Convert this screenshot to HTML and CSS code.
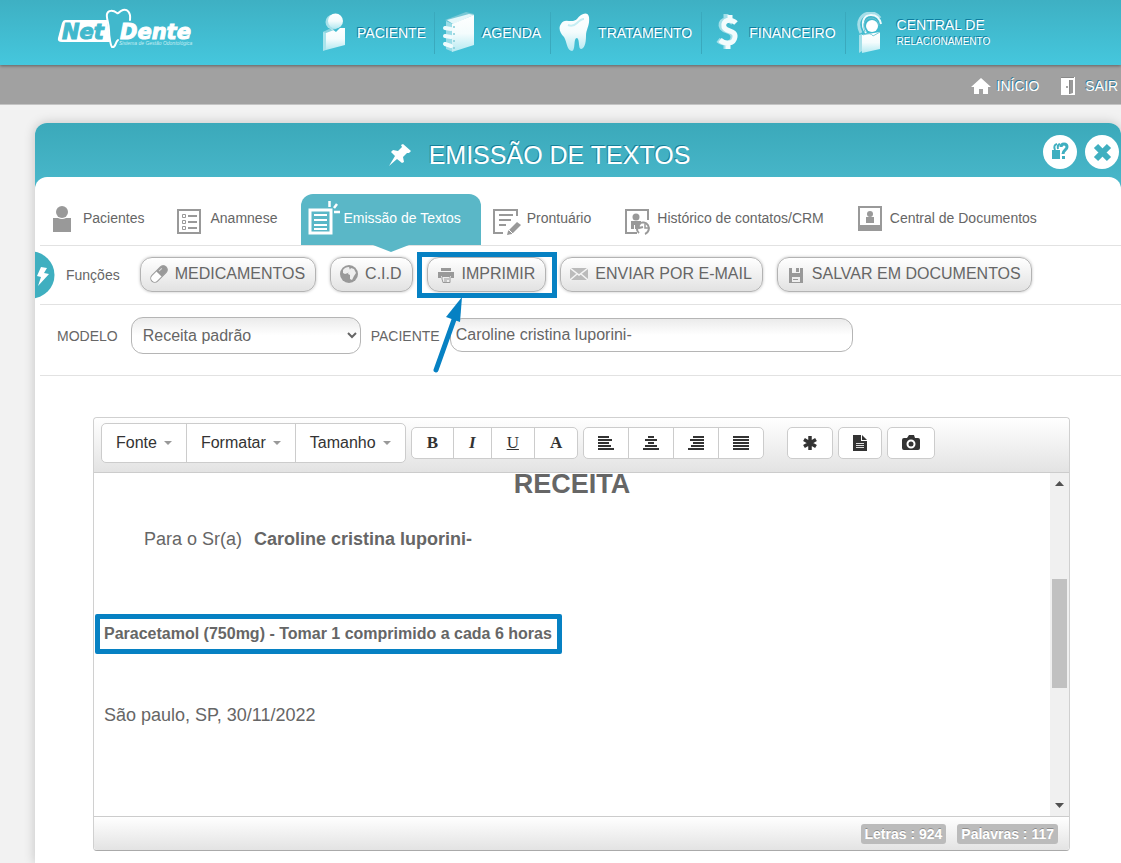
FILE: index.html
```html
<!DOCTYPE html>
<html lang="pt-BR">
<head>
<meta charset="utf-8">
<title>NetDente - Emissão de Textos</title>
<link rel="stylesheet" href="styles.css">
</head>
<body>
<svg class="defs" width="0" height="0" aria-hidden="true">
  <defs>
    <linearGradient id="ice" x1="0" y1="0" x2="0" y2="1">
      <stop offset="0" stop-color="#ffffff"/><stop offset=".5" stop-color="#f4fcfd"/><stop offset="1" stop-color="#b4e9f1"/>
    </linearGradient>
  </defs>
</svg>

<header class="topbar">
  <a class="logo" href="#" aria-label="NetDente">
    <svg width="136" height="44" viewBox="0 0 136 44">
      <path d="M8 12H50L53 34H5Q0 34 1 30L5 15Q6 12 8 12Z" fill="#fff"/>
      <path d="M73 12C74 4 70 1 66 2C62 3 62 6 60 5C56 2 51 2 50 6C49 10 52 15 52 22C52 30 54 38 55 39C59 40 58 34 61 32" fill="#41b8cc" stroke="#fff" stroke-width="2" stroke-linecap="round"/>
      <text class="logo-net" x="5" y="31">Net</text>
      <text class="logo-dente" x="63" y="31">Dente</text>
      <text class="logo-sub" x="62" y="37">Sistema de Gestão Odontológica</text>
    </svg>
  </a>
  <nav class="mainnav">
    <a href="#">
      <svg width="34" height="42" viewBox="0 0 34 42"><circle cx="16" cy="10" r="7.500" fill="#a9e1ea"/><circle cx="18.500" cy="9" r="7.500" fill="url(#ice)"/><path d="M6 20L9 19V38L6 39Z" fill="#a9e4ec"/><path d="M9 20L15 17L19 20L23 16L28 16V33L9 38Z" fill="url(#ice)"/><path d="M6 20L12 17L17 18L9 21Z" fill="#8bd3df"/></svg>
      <span>PACIENTE</span></a>
    <a href="#">
      <svg width="34" height="42" viewBox="0 0 34 42"><path d="M3 8L24 0L32 2V5L11 12Z" fill="#78c8d6"/><path d="M5 8L27 2L32 3L11 12Z" fill="#e4f7fa"/><path d="M4 9L11 12V40L4 37Z" fill="#9bdce7"/><path d="M10 12L32 3V33L10 40Z" fill="url(#ice)"/><path d="M3 16L9 17M3 24L9 25M3 32L9 34" fill="none" stroke="#effbfd" stroke-width="4" stroke-linecap="round"/><g fill="#82ccd9"><circle cx="12" cy="15" r="1"/><circle cx="12" cy="22" r="1"/><circle cx="12" cy="29" r="1"/><circle cx="12" cy="36" r="1"/></g></svg>
      <span>AGENDA</span></a>
    <a href="#">
      <svg width="34" height="42" viewBox="0 0 34 42"><path d="M3 12C6 5 14 12 19 7C23 1 30 -1 31 5C32 14 28 17 28 24C28 32 26 37 23 37C20 37 22 27 19 26C15 26 18 38 14 39C9 39 9 30 6 25C2 21 0 16 3 12Z" fill="url(#ice)"/><path d="M10 13Q15 15 19 11Q23 7 26 7" fill="none" stroke="#c6eef4" stroke-width="2"/></svg>
      <span>TRATAMENTO</span></a>
    <a href="#">
      <svg width="34" height="42" viewBox="0 0 34 42"><g fill="none"><path d="M24 11C18 5 9 9 13 16C16 20 24 18 24 25C24 32 15 33 9 28M17 2V9M17 30V37" stroke="#a2dfe9" stroke-width="5"/><path d="M27 11C22 6 13 8 15 15C17 20 27 18 26 25C25 32 17 33 11 28M21 3V9M19 30V37" stroke="#f3fcfd" stroke-width="5"/></g></svg>
      <span>FINANCEIRO</span></a>
    <a class="wide" href="#">
      <svg width="34" height="42" viewBox="0 0 34 42"><path d="M6 23L9 22V39L6 41Z" fill="#a6e0e9"/><path d="M9 23L27 20V37L9 41Z" fill="url(#ice)"/><path d="M8 21C2 9 9 1 18 1Q24 1 27 6" fill="none" stroke="#a6dee8" stroke-width="3"/><path d="M13 21C7 12 10 3 18 3Q26 3 28 12" fill="none" stroke="#effbfd" stroke-width="2"/><path d="M12 20C9 12 12 6 19 6Q25 7 26 14" fill="none" stroke="#6cc3d2"/><circle cx="19" cy="14" r="6" fill="#fff"/><path d="M10 23Q18 20 20 24L27 20" fill="none" stroke="#7fcbd8"/></svg>
      <span>CENTRAL DE<small>RELACIONAMENTO</small></span></a>
  </nav>
</header>

<nav class="subbar">
  <a href="#"><svg width="20" height="18" viewBox="0 0 20 18"><path d="M10 1L20 10H17V17H12V12H8V17H3V10H0Z" fill="#fff"/></svg>INÍCIO</a>
  <a class="exit" href="#"><svg width="14" height="18" viewBox="0 0 14 18"><path d="M0 0H14V18H0Z" fill="#fff"/><path d="M9 3H12V16L9 17Z" fill="#999"/><path d="M8.500 3V17M0 .5H13" stroke="#888"/><circle cx="6" cy="10" r="1" fill="#888"/></svg>SAIR</a>
</nav>

<main class="panel">
  <header class="panel-head">
    <h1><svg width="24" height="24" viewBox="0 0 24 24"><path d="M15 1L23 8L21 10L19 10L15 14L16 19L14 20L9 16L1 23L7 13L3 9L5 7L10 8L14 4L13 2Z" fill="#fff"/></svg>EMISSÃO DE TEXTOS</h1>
    <div class="head-actions">
      <button type="button" aria-label="Ajuda"><svg width="34" height="34" viewBox="0 0 34 34"><path d="M9 15H17V24H9Z" fill="#3fafc0"/><path d="M14 9Q10 10 12 15M17 9Q14 10 15 14" fill="none" stroke="#3fafc0" stroke-width="2"/><path d="M18 12C18 8 24 8 24 12C24 15 20 15 20 19" fill="none" stroke="#3fafc0" stroke-width="3"/><path d="M19 21H22V24H19Z" fill="#3fafc0"/></svg></button>
      <button type="button" aria-label="Fechar"><svg width="34" height="34" viewBox="0 0 34 34"><path d="M11 11L24 24M24 11L11 24" stroke="#3fafc0" stroke-width="6"/></svg></button>
    </div>
  </header>

  <div class="content">
    <nav class="tabs">
      <a href="#"><svg width="34" height="36" viewBox="0 0 34 36"><circle cx="16" cy="12" r="6" fill="#999"/><path d="M7 18H12Q16 20 20 18H25V32H7Z" fill="#999"/></svg>Pacientes</a>
      <a href="#"><svg width="34" height="36" viewBox="0 0 34 36"><path d="M5 10H27V33H5Z" fill="none" stroke="#999" stroke-width="2"/><g fill="none" stroke="#999"><path d="M9.500 14.500H12.500V17.500H9.500ZM9.500 20.500H12.500V23.500H9.500ZM9.500 26.500H12.500V29.500H9.500Z"/><path d="M15 16H24M15 22H24M15 28H24" stroke-width="2"/></g></svg>Anamnese</a>
      <a class="active" href="#"><svg width="34" height="36" viewBox="0 0 34 36"><g fill="none" stroke="#fff"><path d="M4 10H25V33H4Z" stroke-width="3"/><path d="M8 15H21M8 20H21M8 25H21M8 29H21" stroke-width="2"/><path d="M23.500 1V7M28 8L31 4M28 12H34" stroke-width="2.500"/></g></svg>Emissão de Textos</a>
      <a href="#"><svg width="34" height="36" viewBox="0 0 34 36"><g fill="none" stroke="#999" stroke-width="2"><path d="M27 16V10H4V33H13"/><path d="M9 15H23M9 20H21M9 25H16"/></g><path d="M17 35L18 31L27 22L31 25L22 34Z" fill="#999"/><path d="M18 29L24 35" stroke="#fff"/></svg>Prontuário</a>
      <a href="#"><svg width="34" height="36" viewBox="0 0 34 36"><g fill="none" stroke="#999" stroke-width="2"><path d="M28 20V10H6V33H17"/><path d="M19 33A6 6 0 1 1 25 34M18 24L19 28L23 27"/><path d="M25 24V28H28" stroke-width="1.500"/></g><circle cx="16" cy="17" r="3.500" fill="#999"/><path d="M11 21H21V24L17 29H15V25H14V29H11Z" fill="#999"/></svg>Histórico de contatos/CRM</a>
      <a href="#"><svg width="34" height="36" viewBox="0 0 34 36"><path d="M5 6H29V31H5ZM7 8V25H27V8Z" fill="#999" fill-rule="evenodd"/><circle cx="17" cy="14" r="3" fill="#999"/><path d="M13 17H21V23H13Z" fill="#999"/></svg>Central de Documentos</a>
    </nav>

    <div class="functions">
      <svg class="bolt" width="20" height="48" viewBox="0 0 20 48"><circle cx="-4" cy="24" r="23.500" fill="#3fafc0"/><path d="M6 16L12 17L9 22L14 23L3 35L6 26L2 25Z" fill="#fff"/></svg>
      <span class="label">Funções</span>
      <div class="buttons">
        <button type="button"><svg width="18" height="18" viewBox="0 0 18 18"><g transform="rotate(-45 9 9)"><rect x="-1" y="5" width="20" height="8" rx="4" fill="#fff" stroke="#999"/><path d="M9 5H15A4 4 0 0 1 15 13H9Z" fill="#999"/><path d="M11 7H15" stroke="#ddd"/></g></svg>MEDICAMENTOS</button>
        <button type="button"><svg width="18" height="18" viewBox="0 0 18 18"><circle cx="9" cy="9" r="9" fill="#999"/><path d="M3 5Q5 2 9 2L10 5L8 8L5 9L3 8ZM11 3L14 4L16 8L14 11L12 15L10 14V10L8 9L9 6Z" fill="#eee"/></svg>C.I.D</button>
        <span class="marked">
          <button type="button"><svg width="18" height="18" viewBox="0 0 18 18"><path d="M4 3H14V6H4ZM1 7H17V13H14V11H4V13H1Z" fill="#999"/><path d="M5 11.500H13V17.500H6L5 14Z" fill="#eee" stroke="#999"/><path d="M7 14H12M7 16H10" stroke="#999"/></svg>IMPRIMIR</button>
          <svg class="pointer" width="36" height="76" viewBox="0 0 36 76"><path d="M6 73L26 17" stroke="#0681c3" stroke-width="5" stroke-linecap="round"/><path d="M32 0L30 25L16 20Z" fill="#0681c3"/></svg>
        </span>
        <button type="button"><svg width="18" height="18" viewBox="0 0 18 18"><path d="M0 3H18V15H0Z" fill="#bbb"/><path d="M0 3L9 10L18 3M0 15L7 9M18 15L11 9" fill="none" stroke="#f4f4f4" stroke-width="1.500"/></svg>ENVIAR POR E-MAIL</button>
        <button type="button"><svg width="18" height="18" viewBox="0 0 18 18"><path d="M2 3H5V8H13V3H16V18H2Z" fill="#999"/><path d="M9 3H12V7H9Z" fill="#999"/><path d="M5 12H13V17H5Z" fill="#eee"/><path d="M6 14.500H11" stroke="#999"/></svg>SALVAR EM DOCUMENTOS</button>
      </div>
    </div>

    <form class="filters">
      <label for="modelo">MODELO</label>
      <select id="modelo"><option>Receita padrão</option></select>
      <label for="paciente">PACIENTE</label>
      <input id="paciente" type="text" value="Caroline cristina luporini-">
    </form>

    <section class="editor">
      <div class="toolbar">
        <div class="group menus">
          <button type="button">Fonte<i class="caret"></i></button>
          <button type="button">Formatar<i class="caret"></i></button>
          <button type="button">Tamanho<i class="caret"></i></button>
        </div>
        <div class="group styles">
          <button type="button"><b>B</b></button>
          <button type="button"><b><em>I</em></b></button>
          <button type="button"><u>U</u></button>
          <button type="button"><b>A</b></button>
        </div>
        <div class="group icons">
          <button type="button" aria-label="Alinhar à esquerda"><svg width="16" height="14" viewBox="0 0 16 14"><path d="M0 1H11M0 4H14M0 7H11M0 10H13M0 13H16" stroke="#333" stroke-width="2"/></svg></button>
          <button type="button" aria-label="Centralizar"><svg width="16" height="14" viewBox="0 0 16 14"><path d="M5 1H11M2 4H14M5 7H11M2 10H14M0 13H16" stroke="#333" stroke-width="2"/></svg></button>
          <button type="button" aria-label="Alinhar à direita"><svg width="16" height="14" viewBox="0 0 16 14"><path d="M5 1H16M2 4H16M5 7H16M3 10H16M0 13H16" stroke="#333" stroke-width="2"/></svg></button>
          <button type="button" aria-label="Justificar"><svg width="16" height="14" viewBox="0 0 16 14"><path d="M0 1H16M0 4H16M0 7H16M0 10H16M0 13H16" stroke="#333" stroke-width="2"/></svg></button>
        </div>
        <div class="group icons apart">
          <button type="button" aria-label="Caractere especial"><svg width="16" height="16" viewBox="0 0 16 16"><path d="M8 1V15M2 4.500L14 11.500M14 4.500L2 11.500" stroke="#333" stroke-width="3.500"/></svg></button>
        </div>
        <div class="group icons">
          <button type="button" aria-label="Documento"><svg width="14" height="16" viewBox="0 0 14 16"><path d="M0 0H8V6H14V16H0Z" fill="#333"/><path d="M9 0L14 5H9Z" fill="#333"/><path d="M3 8.500H11M3 10.500H11M3 12.500H11" stroke="#ddd"/></svg></button>
        </div>
        <div class="group icons">
          <button type="button" aria-label="Câmera"><svg width="18" height="16" viewBox="0 0 18 16"><path d="M2 3H5L7 0H12L13 3H16Q18 3 18 5V13Q18 15 16 15H2Q0 15 0 13V5Q0 3 2 3Z" fill="#333"/><circle cx="9" cy="9" r="3.500" fill="#333" stroke="#fff" stroke-width="2"/></svg></button>
        </div>
      </div>
      <div class="paper">
        <article class="text">
          <h2>RECEITA</h2>
          <p class="to"><span>Para o Sr(a)</span><b>Caroline cristina luporini-</b></p>
          <p class="rx"><b>Paracetamol (750mg) - Tomar 1 comprimido a cada 6 horas</b></p>
          <p class="place">São paulo, SP, 30/11/2022</p>
        </article>
        <div class="scroll">
          <svg width="9" height="5" viewBox="0 0 9 5"><path d="M0 5L4.500 0L9 5Z" fill="#505050"/></svg>
          <div class="track"><div class="thumb"></div></div>
          <svg width="9" height="5" viewBox="0 0 9 5"><path d="M0 0L4.500 5L9 0Z" fill="#505050"/></svg>
        </div>
      </div>
      <footer class="status"><span>Letras : 924</span><span>Palavras : 117</span></footer>
    </section>
  </div>
</main>
</body>
</html>
```
FILE: styles.css
```css
* { box-sizing: border-box; }
body {
  margin: 0;
  min-height: 100vh;
  display: flex;
  flex-direction: column;
  overflow-x: hidden;
  background: #f2f2f2;
  color: #666;
  font: 14px/18px "Liberation Sans", Arial, sans-serif;
}
a { color: inherit; text-decoration: none; }
svg { display: block; flex: none; }
.defs { position: absolute; }
button, input, select { font: inherit; color: inherit; margin: 0; }
button { cursor: pointer; }

.topbar {
  display: flex;
  align-items: flex-start;
  height: 65px;
  padding-left: 57px;
  background: linear-gradient(#3eb0c3, #45c7dd);
  color: #fff;
  position: relative;
  box-shadow: 0 1px 3px rgba(0, 0, 0, .4);
}
.logo { margin-top: 8px; width: 252px; }
.logo text { font-family: "DejaVu Sans", sans-serif; font-weight: bold; font-style: italic; font-size: 21px; }
.logo .logo-net { fill: #41b8cc; stroke: #41b8cc; }
.logo .logo-dente { fill: #fff; stroke: #fff; }
.logo .logo-sub { font: italic 5px "Liberation Sans", sans-serif; fill: #c4edf3; }
.mainnav { display: flex; padding-top: 12px; text-shadow: -1px -1px 0 #0f7d9f; }
.mainnav a {
  display: flex;
  align-items: center;
  gap: 6px;
  height: 42px;
  padding: 0 8px;
}
.mainnav a + a { border-left: 1px solid #3aa9bd; padding: 0 9px 0 7px; }
.mainnav a.wide { gap: 10px; }
.mainnav small { display: block; font-size: 10px; line-height: 16px; }

.subbar {
  display: flex;
  justify-content: flex-end;
  gap: 22px;
  height: 40px;
  padding: 3px 3px 0 0;
  border-bottom: 1px solid #c4c4c4;
  background: #a1a1a1;
  color: #fff;
  text-shadow: -1px -1px 0 #2f7d9b;
}
.subbar a { display: flex; align-items: center; gap: 6px; }
.subbar .exit { gap: 10px; }

.panel {
  flex: 1;
  display: flex;
  flex-direction: column;
  margin: 18px 0 0 35px;
  border-radius: 12px 12px 0 0;
  background: linear-gradient(#3ba9ba, #49b8cb 66px);
  box-shadow: 0 0 12px rgba(0, 0, 0, .2);
}
.panel-head { display: flex; height: 54px; padding: 0 2px 0 0; }
.panel-head h1 {
  flex: 1;
  display: flex;
  justify-content: center;
  align-items: center;
  gap: 17px;
  margin: 0;
  padding-top: 10px;
  color: #fff;
  font-size: 25px;
  font-weight: normal;
  line-height: 30px;
  text-shadow: -1px -1px 0 #17809a;
}
.head-actions { display: flex; gap: 8px; padding-top: 12px; }
.head-actions button { width: 34px; height: 34px; padding: 0; border: 0; border-radius: 50%; background: #fff; }
.content { flex: 1; border-radius: 12px 12px 0 0; background: #fff; }

.tabs, .functions, .filters { display: flex; margin-left: 5px; border-bottom: 1px solid #e2e2e2; }
.tabs { gap: 4px; padding: 17px 0 0 1px; }
.tabs a {
  position: relative;
  display: flex;
  align-items: center;
  gap: 3px;
  height: 51px;
  padding: 0 20px 3px 5px;
  border-radius: 12px 12px 0 0;
  white-space: nowrap;
}
.tabs .active { background: #5ab7c7; color: #fff; }
.tabs .active::after {
  content: "";
  position: absolute;
  top: 100%;
  left: 50%;
  margin-left: -18px;
  border: solid transparent;
  border-width: 7px 18px 0;
  border-top-color: #5ab7c7;
}

.functions { align-items: center; height: 59px; white-space: nowrap; }
.bolt { margin-left: -5px; }
.label { margin: 0 20px 0 11px; }
.buttons { display: flex; gap: 14px; padding-bottom: 2px; }
.buttons button {
  display: flex;
  align-items: center;
  gap: 7px;
  height: 35px;
  padding: 0 10px 0 9px;
  border: 1px solid #b3b3b3;
  border-radius: 12px;
  background: linear-gradient(#fff, #e2e2e2);
  box-shadow: 0 0 3px rgba(0, 0, 0, .25);
  font-size: 16px;
}
.marked { position: relative; }
.marked::after { content: ""; position: absolute; inset: -5px -11px -6px -10px; border: 5px solid #0681c3; }
.pointer { position: absolute; left: 3px; top: 40px; z-index: 1; }

.filters { align-items: center; height: 71px; padding: 0 0 10px 17px; }
.filters label { padding-top: 2px; }
.filters select, .filters input {
  border: 1px solid #b5b5b5;
  border-radius: 12px;
  background: linear-gradient(#ebebeb, #fff 50%);
  font-size: 16px;
}
.filters select { width: 230px; height: 37px; margin: 0 10px 0 13px; padding: 0 2px 0 7px; }
.filters input { width: 403px; height: 34px; margin-left: 10px; padding: 0 6px 0 5px; }

.editor { margin: 41px 51px 0 58px; border: 1px solid #d0d0d0; border-bottom-color: #aaa; border-radius: 4px; }
.toolbar {
  display: flex;
  align-items: center;
  gap: 5px;
  padding: 5px 7px 9px;
  border-bottom: 1px solid #ccc;
  border-radius: 4px 4px 0 0;
  background: linear-gradient(#fff, #e3e3e3);
  color: #333;
}
.group { display: flex; border: 1px solid #ccc; border-radius: 5px; background: #fff; overflow: hidden; }
.group button { display: flex; align-items: center; justify-content: center; height: 30px; border: 0; background: none; }
.group button + button { border-left: 1px solid #ccc; }
.menus button { height: 38px; padding: 0 14px; font-size: 16px; gap: 7px; }
.caret { border: solid transparent; border-width: 4px 4px 0; border-top-color: #999; }
.styles button { padding: 0 15px; font: 17px/20px "Liberation Serif", serif; }
.icons button { padding: 0 14px; }
.apart { margin-left: 18px; }

.paper { display: flex; height: 343px; overflow: hidden; }
.text { flex: 1; font-size: 18px; line-height: 20px; }
.text h2 { margin: 0; font-size: 27px; line-height: 22px; text-align: center; }
.text p { margin: 0 0 0 10px; }
.text .to { display: flex; gap: 12px; margin: 34px 0 0 50px; }
.text .rx { margin-top: 75px; font-size: 16px; }
.rx b { position: relative; display: inline-block; }
.rx b::after { content: ""; position: absolute; inset: -10px; border: 5px solid #0681c3; border-radius: 2px; left: -9px; }
.text .place { margin-top: 61px; }
.scroll {
  display: flex;
  flex-direction: column;
  align-items: center;
  width: 19px;
  padding: 8px 0;
  background: #f0f0f0;
}
.track { flex: 1; padding-top: 93px; }
.thumb { width: 15px; height: 109px; background: #c1c1c1; }

.status {
  display: flex;
  justify-content: flex-end;
  gap: 11px;
  padding: 7px 11px 6px;
  border-top: 1px solid #ccc;
  background: linear-gradient(#fff, #e3e3e3);
  border-radius: 0 0 4px 4px;
}
.status span {
  padding: 0 4px;
  border-radius: 3px;
  background: #bbb;
  color: #fff;
  font-weight: bold;
  line-height: 20px;
  text-shadow: 0 -1px 0 rgba(0, 0, 0, .25);
}
```
